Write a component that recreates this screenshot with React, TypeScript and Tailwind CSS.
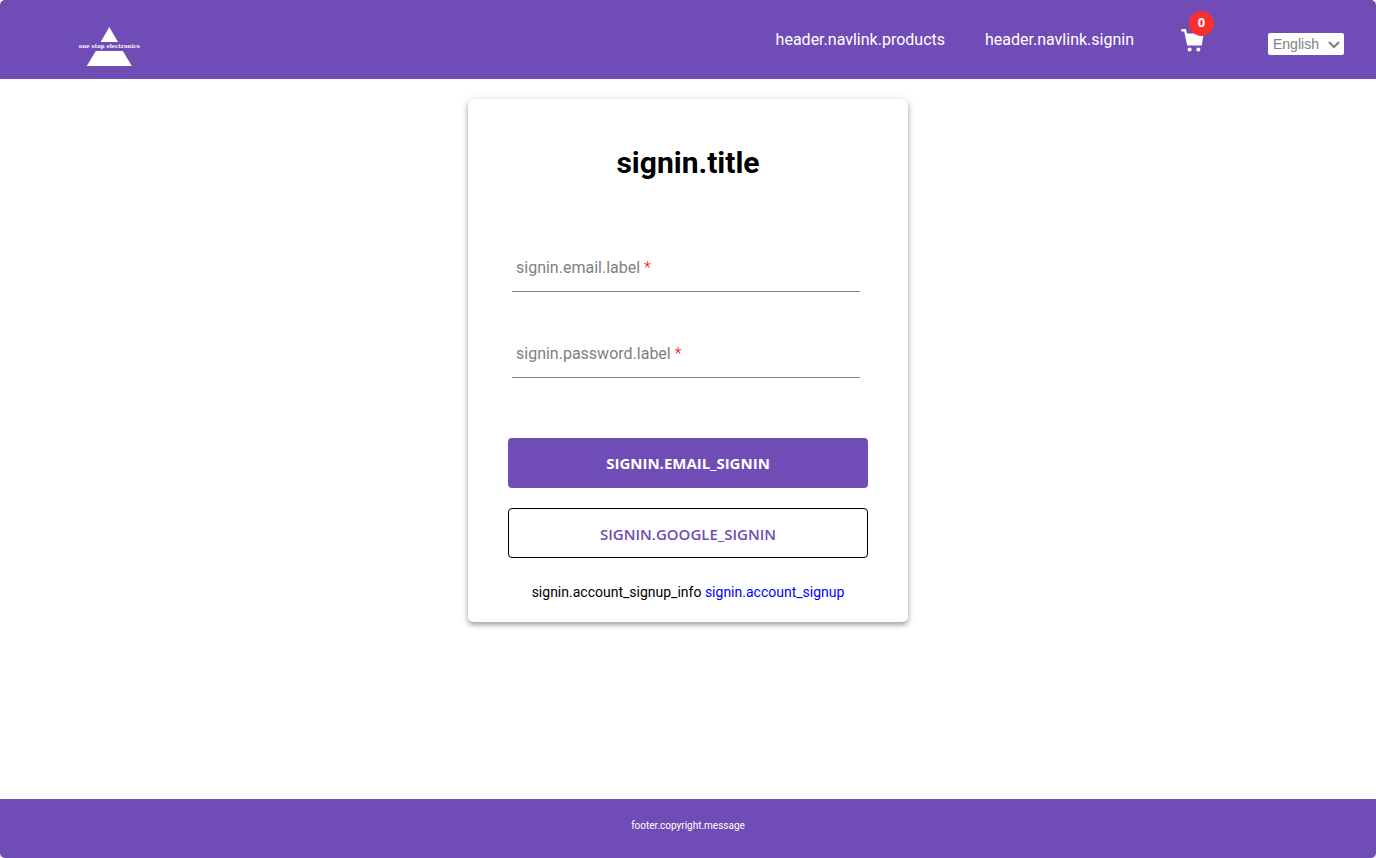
import React, { useState } from "react";

function Logo() {
  return (
    <svg viewBox="0 0 64 42" className="h-[42px] w-16" role="img" aria-label="one stop electronics">
      <path d="M32.3 1 L41 16 H23.7 Z" fill="white" />
      <path d="M18.8 25 H45.8 L54.8 40 H9.8 Z" fill="white" />
      <text
        x="32.3"
        y="22"
        textAnchor="middle"
        fill="white"
        fontFamily='"DejaVu Serif", serif'
        fontWeight="bold"
        fontSize="5.4"
      >
        one stop electronics
      </text>
    </svg>
  );
}

function CartIcon() {
  return (
    <svg viewBox="0 0 24 24" className="size-6" fill="white" aria-hidden="true">
      <path d="M0.4 1 H4.8 L6 5.4 H22.6 L20.8 17.6 H6.2 L3.2 3.4 H0.4 Z" />
      <circle cx="8.6" cy="21.6" r="2" />
      <circle cx="17.4" cy="21.6" r="2" />
    </svg>
  );
}

function Field({ id, label, type }: { id: string; label: string; type: string }) {
  const [value, setValue] = useState("");
  return (
    <div className="relative mr-2 ml-1 h-[46px] border-b border-[#808080]">
      <input
        id={id}
        type={type}
        required
        value={value}
        onChange={(e) => setValue(e.target.value)}
        className="h-full w-full bg-transparent px-1 text-base outline-none"
      />
      <label
        htmlFor={id}
        className={
          value
            ? "pointer-events-none absolute -top-3 left-1 text-xs text-[#808080]"
            : "pointer-events-none absolute top-2.5 left-1 text-base text-[#808080]"
        }
      >
        {label} <span className="font-light text-[#ff0000]">*</span>
      </label>
    </div>
  );
}

export default function App() {
  return (
    <div className="flex min-h-screen flex-col bg-white font-['Roboto',sans-serif] text-black">
      <header className="flex h-[79px] items-center justify-between rounded-t-[5px] bg-[#704cb6] pr-8 pl-[77px]">
        <a href="#home" className="pt-3.5">
          <Logo />
        </a>
        <nav className="flex items-center text-base text-white">
          <a href="#products">header.navlink.products</a>
          <a href="#signin" className="ml-10">
            header.navlink.signin
          </a>
          <a href="#cart" aria-label="Cart" className="relative ml-[47px]">
            <CartIcon />
            <span className="absolute -top-[17px] left-2 flex size-[25px] items-center justify-center rounded-full bg-[#f92f2f] font-['Open_Sans',sans-serif] text-[13px] font-bold">
              0
            </span>
          </a>
          <div className="relative mt-2 ml-[63px]">
            <select
              aria-label="Language"
              className="block h-[22px] w-[76px] appearance-none rounded-xs bg-white pl-[5px] font-['Liberation_Sans',sans-serif] text-sm text-[#808080]"
            >
              <option>English</option>
            </select>
            <svg
              viewBox="0 0 12 8"
              className="pointer-events-none absolute top-2 right-1 h-2 w-3"
              fill="none"
              stroke="#808080"
              strokeWidth="2.2"
              aria-hidden="true"
            >
              <path d="M1 1 L6 6 L11 1" />
            </svg>
          </div>
        </nav>
      </header>

      <main className="flex flex-1 flex-col items-center px-4 py-5">
        <form
          onSubmit={(e) => e.preventDefault()}
          className="w-full max-w-[440px] rounded-[5px] bg-white px-10 pt-11 pb-5 shadow-[0_3px_5px_rgba(0,0,0,0.3),0_1px_10px_rgba(0,0,0,0.12)]"
        >
          <h1 className="text-center text-[30px] leading-10 font-bold">signin.title</h1>
          <div className="mt-[63px] flex flex-col gap-10">
            <Field id="email" type="email" label="signin.email.label" />
            <Field id="password" type="password" label="signin.password.label" />
          </div>
          <div className="mt-[60px] flex flex-col gap-5 font-['Open_Sans',sans-serif] text-[15px]">
            <button type="submit" className="h-[50px] rounded bg-[#704cb6] font-bold text-white">
              SIGNIN.EMAIL_SIGNIN
            </button>
            <button
              type="button"
              className="h-[50px] rounded border border-black bg-white pt-0.5 font-semibold text-[#704cb6]"
            >
              SIGNIN.GOOGLE_SIGNIN
            </button>
          </div>
          <p className="mt-6 text-center text-sm">
            signin.account_signup_info{" "}
            <a href="#signup" className="text-[#0000ff]">
              signin.account_signup
            </a>
          </p>
        </form>
      </main>

      <footer className="h-[59px] rounded-b-[5px] bg-[#704cb6] pt-5 text-center text-[10px] leading-[14px] text-white">
        footer.copyright.message
      </footer>
    </div>
  );
}
